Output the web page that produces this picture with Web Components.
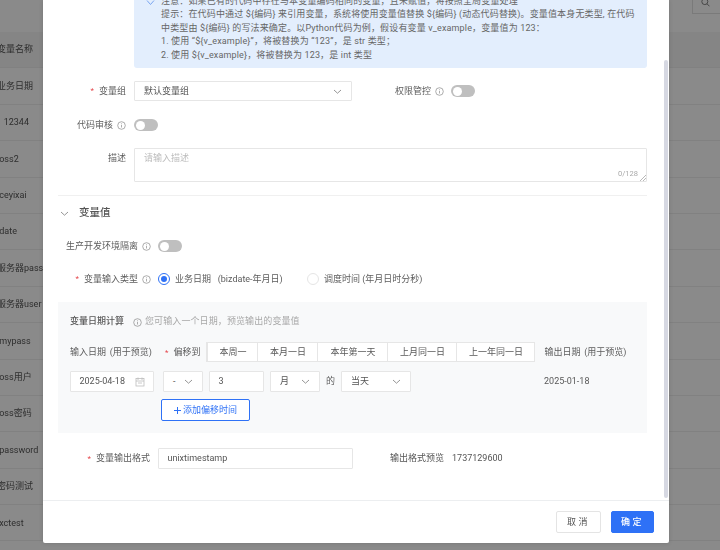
<!DOCTYPE html>
<html lang="zh">
<head>
<meta charset="utf-8">
<title>变量</title>
<style>
html,body{margin:0;height:100%;overflow:hidden;background:#fff}
body{font:9px/13.5px Roboto,"Noto Sans CJK SC",sans-serif;color:#555}
</style>
</head>
<body>
<app-shell>
  <bg-list slot="bg"></bg-list>
  <var-modal slot="modal">
    <note-box>
      <div>注意：如果已有的代码中存在与本变量编码相同的变量，且未赋值，将按照全局变量处理</div>
      <div>提示：在代码中通过 ${编码} 来引用变量，系统将使用变量值替换 ${编码} (动态代码替换)。变量值本身无类型, 在代码</div>
      <div>中类型由 ${编码} 的写法来确定。以Python代码为例，假设有变量 v_example，变量值为 123：</div>
      <div>1. 使用 “${v_example}”，将被替换为 “123”，是 str 类型；</div>
      <div>2. 使用 ${v_example}，将被替换为 123，是 int 类型</div>
    </note-box>
    <form-row style="margin-top:13px">
      <form-label req>变量组</form-label>
      <drop-select style="width:218px;height:20px">默认变量组</drop-select>
      <form-label style="width:auto;margin:0 7px 0 43px" info>权限管控</form-label>
      <tog-switch></tog-switch>
    </form-row>
    <form-row style="margin-top:14px">
      <form-label info>代码审核</form-label>
      <tog-switch></tog-switch>
    </form-row>
    <form-row style="margin-top:13px;align-items:flex-start">
      <form-label style="height:20px">描述</form-label>
      <text-area placeholder="请输入描述" count="0/128"></text-area>
    </form-row>
    <hr-line></hr-line>
    <sec-head>变量值</sec-head>
    <form-row style="margin-top:14px">
      <form-label info wide>生产开发环境隔离</form-label>
      <tog-switch></tog-switch>
    </form-row>
    <form-row style="margin-top:13px">
      <form-label req info wide>变量输入类型</form-label>
      <radio-opt checked style="width:149px">业务日期&nbsp;&nbsp;&nbsp;(bizdate-年月日)</radio-opt>
      <radio-opt>调度时间 (年月日时分秒)</radio-opt>
    </form-row>
    <calc-panel></calc-panel>
    <form-row style="margin-top:15px">
      <form-label req style="width:92px">变量输出格式</form-label>
      <text-field style="width:195px;height:21px"><span style="padding-top:1px">unixtimestamp</span></text-field>
      <span style="margin-left:37px;padding-top:1px">输出格式预览</span>
      <span style="margin-left:8px;padding-top:1px">1737129600</span>
    </form-row>
  </var-modal>
</app-shell>

<script>
const el=(name,css,html)=>{
  customElements.define(name,class extends HTMLElement{
    constructor(){super();const s=this.attachShadow({mode:'open'});
      const h=typeof html==='function'?html(this):html;
      s.innerHTML=`<style>${css}</style>${h}`;}
  });
};
const CHEV=`<svg width="9" height="9" viewBox="0 0 9 9" fill="none" stroke="#7a7a7a" stroke-width=".8"><path d="M1 3l3.5 3.2L8 3"/></svg>`;

el('app-shell',`:host{display:block;position:relative;width:720px;height:550px;overflow:hidden}
 .dim{position:absolute;inset:0;background:rgba(0,0,0,.46)}
 .m{position:absolute;left:43px;top:0;width:626px;height:543px;filter:blur(.42px)}
 .b{display:block;filter:blur(.42px)}`,
 `<div class="b"><slot name="bg"></slot></div><div class="dim"></div><div class="m"><slot name="modal"></slot></div>`);

el('bg-list',`:host{display:block;width:720px;height:550px;overflow:hidden;background:#fff;color:#555}
 .top{height:32px;display:flex;justify-content:flex-end;align-items:flex-start}
 .search{width:40px;height:14px;margin-right:-12px;border:1px solid #e2e2e2;border-top:0;box-sizing:border-box;display:flex;padding-left:8px}
 .search svg{margin-top:-2px}
 .row{height:36.4px;box-sizing:border-box;border-bottom:1px solid #eee;display:flex;align-items:center;margin-left:-3px;padding-top:1px;font-size:9px;white-space:pre}
 .head{background:#f6f6f6}`,
 ()=>{
  const rows=['业务日期','   12344',' oss2',' ceyixai',' date','服务器pass','服务器user',' mypass',' oss用户',' oss密码',' password','密码测试',' xctest'];
  return `<div class="top"><div class="search"><svg width="9" height="9" viewBox="0 0 9 9" fill="none" stroke="#777" stroke-width=".9"><circle cx="3.8" cy="3.6" r="3"/><path d="M6 5.8L8.5 8.3"/></svg></div></div>
  <div class="row head">变量名称</div>`+rows.map(r=>`<div class="row">${r}</div>`).join('');
 });

el('var-modal',`:host{display:flex;flex-direction:column;width:626px;height:543px;background:#fff;border-radius:0 0 2px 2px;box-shadow:0 0 4px rgba(0,0,0,.15);overflow:hidden;position:relative}
 .body{flex:1;min-height:0;overflow:hidden;display:flex;flex-direction:column;justify-content:flex-end;padding:0 22px 31px 15px}
 ::slotted(*){flex-shrink:0}
 .thumb{position:absolute;left:621px;top:60px;width:4px;height:438px;background:#d6d8e2;border-radius:2px}
 .foot{height:43px;box-sizing:border-box;border-top:1px solid #eceef0;display:flex;justify-content:flex-end;align-items:flex-start;padding:10px 15px 0 0;gap:10px;flex:none}
 button{font:inherit;height:22px;border-radius:2px;padding:1px 0 0;letter-spacing:2.5px;box-sizing:border-box}
 .c{width:45px;background:#fff;border:1px solid #e4e4e4;color:#555}
 .o{width:43px;background:#2e71f6;border:1px solid #2e71f6;color:#fff;font-weight:500}`,
 `<div class="body"><slot></slot></div><div class="thumb"></div>
 <div class="foot"><button class="c">取消</button><button class="o">确定</button></div>`);

el('note-box',`:host{display:block;margin-left:76px;width:513px;box-sizing:border-box;background:#e3eefd;border-radius:0 0 3px 3px;padding:0 13px 6px 27px;white-space:nowrap;color:#666;position:relative;letter-spacing:.15px}
 svg{position:absolute;left:10px;top:0}`,
 `<svg width="12" height="12" viewBox="0 0 12 12" fill="none" stroke="#7aa5f0" stroke-width="1"><path d="M3 5.5L6.5 9.5 10 5.5"/></svg><slot></slot>`);

el('form-row',`:host{display:flex;align-items:center;min-height:20px}`,`<slot></slot>`);

el('form-label',`:host{display:flex;align-items:center;justify-content:flex-end;width:68px;margin-right:8px;white-space:nowrap;color:#5c5c5c;flex:none}
 :host([wide]){width:93px;margin-right:7px}
 .s{color:#e5484d;margin-right:5px;font-size:8px}
 .x{padding-top:1px}
 .i{margin-left:4px;display:flex}`,
 h=>`${h.hasAttribute('req')?'<span class="s">*</span>':''}<span class="x"><slot></slot></span>${h.hasAttribute('info')?`<span class="i"><info-dot></info-dot></span>`:''}`);

el('info-dot',`:host{display:inline-flex}`,`<svg width="9" height="9" viewBox="0 0 9 9" fill="none" stroke="#8a8a8a" stroke-width=".7"><circle cx="4.5" cy="4.5" r="3.8"/><path d="M4.5 3.9v2.6M4.5 2.4v.8"/></svg>`);

el('tog-switch',`:host{display:block;width:24px;height:12px;border-radius:6px;background:#bfbfbf;position:relative;flex:none}
 i{position:absolute;left:1.5px;top:1.5px;width:9px;height:9px;border-radius:50%;background:#fff}`,`<i></i>`);

el('drop-select',`:host{display:flex;align-items:center;justify-content:space-between;box-sizing:border-box;border:1px solid #e6e6e6;background:#fff;border-radius:1px;color:#555;flex:none;white-space:nowrap;padding:0 9px}
 span{padding-top:1px}`,`<span><slot></slot></span>${CHEV}`);

el('text-field',`:host{display:flex;align-items:center;box-sizing:border-box;border:1px solid #e6e6e6;border-radius:1px;background:#fff;padding:0 8.5px;flex:none;color:#555}`,`<slot></slot>`);

el('text-area',`:host{display:block;position:relative;width:513px;height:34px;box-sizing:border-box;border:1px solid #e6e6e6;border-radius:1px;background:#fff;flex:none}
 .p{position:absolute;left:9px;top:3px;color:#bcbcbc}
 .c{position:absolute;right:8px;bottom:1px;color:#aaa;font-size:7.5px}
 svg{position:absolute;right:0;bottom:0}`,
 h=>`<div class="p">${h.getAttribute('placeholder')}</div><div class="c">${h.getAttribute('count')}</div><svg width="6" height="6" viewBox="0 0 6 6" stroke="#888" stroke-width=".6"><path d="M0 6L6 0M3 6l3-3"/></svg>`);

el('hr-line',`:host{display:block;height:1px;background:#f0f0f0;margin:13px 0 0}`,``);

el('sec-head',`:host{display:flex;align-items:center;height:18px;margin-top:8px;font-size:10.5px;font-weight:500;color:#555}
 .a{width:21px;padding-left:2px;box-sizing:border-box;display:flex}`,`<span class="a">${CHEV}</span><slot></slot>`);

el('radio-opt',`:host{display:flex;align-items:center;gap:5px;white-space:nowrap;flex:none;color:#5c5c5c}
 i{width:12px;height:12px;box-sizing:border-box;border-radius:50%;border:1px solid #e5e5e5;display:block;background:#fff;flex:none}
 span{padding-top:1px}
 :host([checked]) i{border-color:#2e71f6;position:relative}
 :host([checked]) i::after{content:"";position:absolute;inset:2px;border-radius:50%;background:#2e71f6}`,`<i></i><span><slot></slot></span>`);

el('seg-group',`:host{display:flex;height:20px;box-sizing:border-box;border:1px solid #e6e6e6;background:#fff;flex:none}
 span{display:flex;align-items:center;justify-content:center;border-left:1px solid #e6e6e6;box-sizing:border-box;color:#595959;padding-top:1px}
 span:first-child{border-left:0}`,
 ()=>[['本周一',50],['本月一日',60],['本年第一天',70],['上月同一日',69],['上一年同一日',78]].map(([t,w])=>`<span style="width:${w}px">${t}</span>`).join(''));

el('calc-panel',`:host{display:block;box-sizing:border-box;height:131px;margin-top:13px;background:#f8f9fa;padding:9px 12px 0;color:#5c5c5c;white-space:nowrap}
 .t{display:flex;align-items:center;height:20px}
 .t b{font-weight:500;margin-right:9px;color:#595959;padding-top:2px}
 .t span{margin-left:3px;color:#a8a8a8;padding-top:2px;letter-spacing:.1px}
 .t info-dot{margin-top:2px}
 .r{display:flex;align-items:center}
 .r1{height:20px;margin-top:11px}
 .r1>span{padding-top:1px}
 .w{word-spacing:1.5px}
 .r2{height:21px;margin-top:9px}
 .s{color:#e5484d;margin-right:5px;font-size:8px}
 .add{display:flex;align-items:center;justify-content:center;gap:2px;width:89px;height:22px;margin:7px 0 0 91px;padding-top:1px;box-sizing:border-box;border:1px solid #2e71f6;border-radius:2px;color:#2e71f6;background:#fff}`,
 `<div class="t"><b>变量日期计算</b><info-dot></info-dot><span>您可输入一个日期，预览输出的变量值</span></div>
 <div class="r r1"><span class="w" style="width:88px;flex:none;margin-right:7px">输入日期 (用于预览)</span><span class="s">*</span><span style="width:33px;flex:none">偏移到</span><seg-group></seg-group><span class="w" style="margin-left:9px">输出日期 (用于预览)</span></div>
 <div class="r r2">
  <text-field style="width:84px;height:21px;justify-content:space-between">2025-04-18<svg width="10" height="10" viewBox="0 0 10 10" fill="none" stroke="#bdbdbd" stroke-width=".8"><rect x="1" y="1.5" width="8" height="7.5"/><path d="M1 4h8M3 3V.5M7 3V.5M3 6h4"/></svg></text-field>
  <drop-select style="width:40px;height:21px;margin-left:9px">-</drop-select>
  <text-field style="width:55px;height:21px;margin-left:6px">3</text-field>
  <drop-select style="width:50px;height:21px;margin-left:6px">月</drop-select>
  <span style="margin:0 6px">的</span>
  <drop-select style="width:70px;height:21px">当天</drop-select>
  <span style="margin-left:133px;color:#595959">2025-01-18</span>
 </div>
 <div class="add"><svg width="7" height="7" viewBox="0 0 7 7" stroke="#2e71f6" stroke-width="1"><path d="M0 3.5h7M3.5 0v7"/></svg>添加偏移时间</div>`);
</script>
</body>
</html>
